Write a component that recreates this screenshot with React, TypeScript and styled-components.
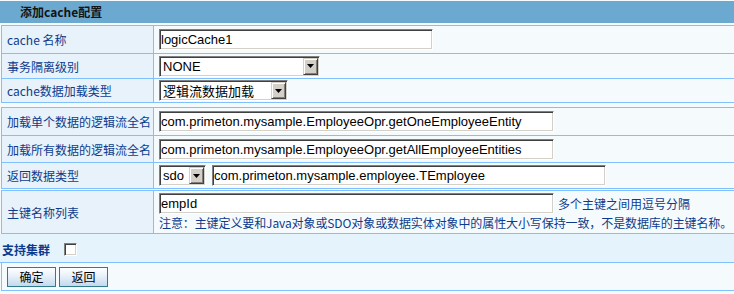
import React from 'react';
import styled, { createGlobalStyle } from 'styled-components';

const GlobalStyle = createGlobalStyle`
  html, body { margin: 0; padding: 0; background: #F5FBFD; }
  body { font-family: "Noto Sans CJK SC", "Liberation Sans", sans-serif; font-size: 12px; }
  * { box-sizing: border-box; }
`;

const Page = styled.div`
  width: 734px;
  height: 294px;
  overflow: hidden;
  padding-top: 1px;
  background: #F5FBFD;
`;

const Header = styled.div`
  height: 22px;
  background: #6BA9D0;
  padding-left: 20px;
  font-family: "Noto Sans CJK SC", "DejaVu Sans", sans-serif;
  font-weight: bold;
  font-size: 12px;
  line-height: 22px;
  color: #141414;
`;

const FormTable = styled.div<{ $mt: number }>`
  margin: ${p => p.$mt}px 0 0 1px;
  border: 1px solid #80C0FF;
  border-right: none;
  background: #F5FBFD;
`;

const Row = styled.div<{ $h: number }>`
  box-sizing: content-box;
  display: flex;
  height: ${p => p.$h}px;
  & + & { border-top: 1px solid #80C0FF; }
`;

const Label = styled.div`
  width: 152px;
  flex: none;
  padding-left: 5px;
  display: flex;
  align-items: center;
  background: #E8F2FA;
  border-right: 1px solid #80C0FF;
  color: #0C3B8D;
  font-size: 12px;
  white-space: nowrap;
`;

const Value = styled.div`
  flex: 1;
  min-width: 0;
  display: flex;
  align-items: center;
  gap: 6px;
  padding-left: 5px;
`;

const StackValue = styled.div`
  flex: 1;
  min-width: 0;
  display: flex;
  flex-direction: column;
  padding: 2px 0 0 5px;
`;

const InputLine = styled.div`
  display: flex;
  align-items: center;
  gap: 4px;
`;

const TextInput = styled.input<{ $w: number }>`
  width: ${p => p.$w}px;
  height: 21px;
  margin: 0;
  padding: 0 0 0 1px;
  border: 1px solid;
  border-color: #808080 #FFFFFF #FFFFFF #808080;
  box-shadow: inset 1px 1px #404040, inset -1px -1px #D4D0C8;
  background: #FFFFFF;
  font-family: "Liberation Sans", Arial, sans-serif;
  font-size: 13px;
  color: #000;
  outline: none;
`;

const SelectBox = styled.div<{ $w: number }>`
  width: ${p => p.$w}px;
  height: 21px;
  display: flex;
  align-items: stretch;
  padding: 1px;
  border: 1px solid;
  border-color: #808080 #FFFFFF #FFFFFF #808080;
  box-shadow: inset 1px 1px #404040, inset -1px -1px #D4D0C8;
  background: #FFFFFF;
`;

const SelectText = styled.span`
  flex: 1;
  padding-left: 2px;
  display: flex;
  align-items: center;
  font-family: "Liberation Sans", "Noto Sans CJK SC", sans-serif;
  font-size: 13px;
  color: #000;
  white-space: nowrap;
  overflow: hidden;
`;

const ArrowButton = styled.span`
  width: 15px;
  flex: none;
  display: flex;
  align-items: center;
  justify-content: center;
  background: #D4D0C8;
  border: 1px solid;
  border-color: #D4D0C8 #404040 #404040 #D4D0C8;
  box-shadow: inset 1px 1px #FFFFFF, inset -1px -1px #808080;
`;

const Hint = styled.span`
  color: #0C3B8D;
  font-size: 12px;
  white-space: nowrap;
`;

const Note = styled.div`
  margin-top: 1px;
  color: #0C3B8D;
  font-size: 12px;
  line-height: 16px;
  letter-spacing: -0.1px;
  white-space: nowrap;
`;

const SupportRow = styled.div`
  height: 29px;
  display: flex;
  align-items: center;
  gap: 14px;
  padding: 3px 0 0 2px;
  background: #E5F3FD;
  border-bottom: 1px solid #80C0FF;
`;

const SupportLabel = styled.span`
  font-weight: bold;
  font-size: 12px;
  color: #0C3B8D;
`;

const CheckBox = styled.input`
  appearance: none;
  margin: 0;
  width: 13px;
  height: 13px;
  border: 1px solid;
  border-color: #808080 #FFFFFF #FFFFFF #808080;
  box-shadow: inset 1px 1px #404040, inset -1px -1px #D4D0C8;
  background: #FFFFFF;
`;

const ButtonBar = styled.div`
  margin-left: 1px;
  height: 28px;
  display: flex;
  align-items: center;
  gap: 3px;
  padding-left: 5px;
  border-left: 1px solid #80C0FF;
  border-bottom: 1px solid #80C0FF;
  background: #F5FBFD;
`;

const Button = styled.button`
  width: 49px;
  height: 20px;
  margin: 0;
  padding: 0;
  border: 1px solid #2F7C8C;
  background: linear-gradient(#FFFFFF, #EAF2FA 40%, #C4D9EE);
  font-family: "Noto Sans CJK SC", sans-serif;
  font-size: 12px;
  color: #000;
  line-height: 18px;
`;

const Arrow = () => (
  <svg width="7" height="4" viewBox="0 0 7 4">
    <path d="M0 0H7L3.5 4Z" fill="#000" />
  </svg>
);

const Select = ({ w, text }: { w: number; text: string }) => (
  <SelectBox $w={w}>
    <SelectText>{text}</SelectText>
    <ArrowButton><Arrow /></ArrowButton>
  </SelectBox>
);

export default function App() {
  return (
    <Page>
      <GlobalStyle />
      <Header>添加cache配置</Header>
      <FormTable $mt={2}>
        <Row $h={27}>
          <Label>cache 名称</Label>
          <Value><TextInput $w={274} defaultValue="logicCache1" /></Value>
        </Row>
        <Row $h={24}>
          <Label>事务隔离级别</Label>
          <Value><Select w={161} text="NONE" /></Value>
        </Row>
        <Row $h={23}>
          <Label>cache数据加载类型</Label>
          <Value><Select w={129} text="逻辑流数据加载" /></Value>
        </Row>
      </FormTable>
      <FormTable $mt={4}>
        <Row $h={27}>
          <Label>加载单个数据的逻辑流全名</Label>
          <Value><TextInput $w={395} defaultValue="com.primeton.mysample.EmployeeOpr.getOneEmployeeEntity" /></Value>
        </Row>
        <Row $h={26}>
          <Label>加载所有数据的逻辑流全名</Label>
          <Value><TextInput $w={395} defaultValue="com.primeton.mysample.EmployeeOpr.getAllEmployeeEntities" /></Value>
        </Row>
        <Row $h={25}>
          <Label>返回数据类型</Label>
          <Value>
            <Select w={47} text="sdo" />
            <TextInput $w={394} defaultValue="com.primeton.mysample.employee.TEmployee" />
          </Value>
        </Row>
      </FormTable>
      <FormTable $mt={1}>
        <Row $h={42}>
          <Label>主键名称列表</Label>
          <StackValue>
            <InputLine>
              <TextInput $w={395} defaultValue="empId" />
              <Hint>多个主键之间用逗号分隔</Hint>
            </InputLine>
            <Note>注意：主键定义要和Java对象或SDO对象或数据实体对象中的属性大小写保持一致，不是数据库的主键名称。</Note>
          </StackValue>
        </Row>
      </FormTable>
      <SupportRow>
        <SupportLabel>支持集群</SupportLabel>
        <CheckBox type="checkbox" />
      </SupportRow>
      <ButtonBar>
        <Button>确定</Button>
        <Button>返回</Button>
      </ButtonBar>
    </Page>
  );
}
